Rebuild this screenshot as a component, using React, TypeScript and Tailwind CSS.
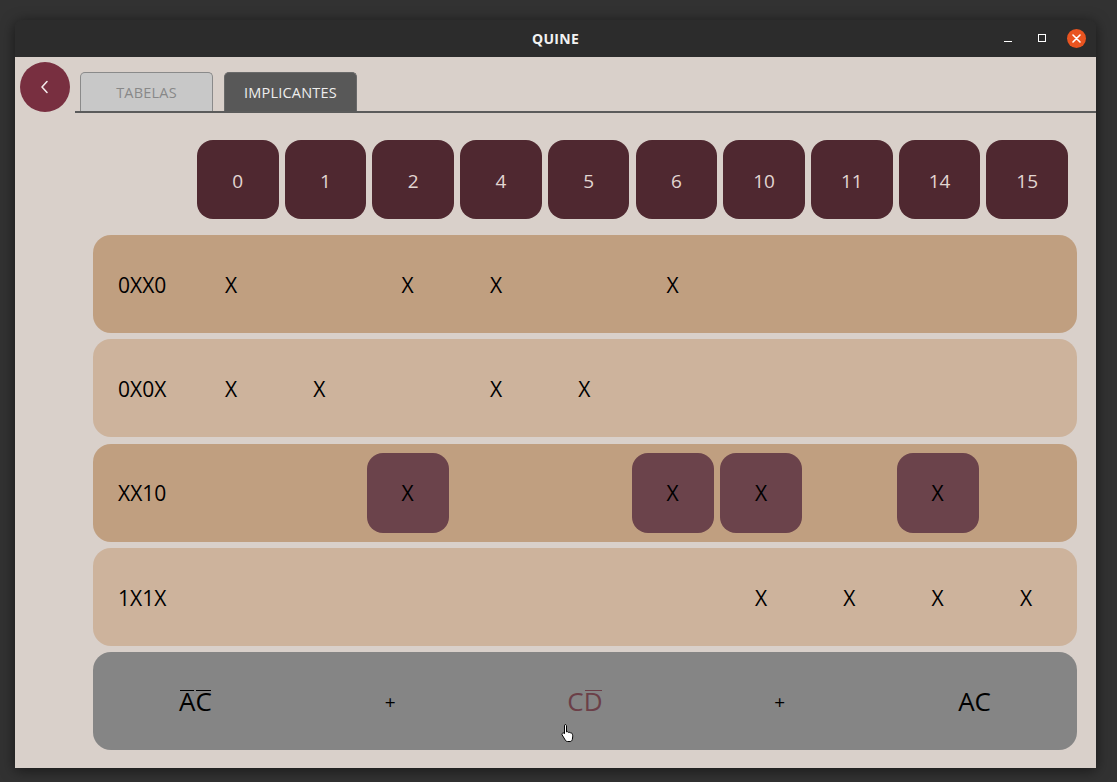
import React from "react";

const cols = [0, 1, 2, 4, 5, 6, 10, 11, 14, 15];

type Row = { label: string; marks: number[]; hi?: boolean; dark: boolean };
const rows: Row[] = [
  { label: "0XX0", marks: [0, 2, 4, 6], dark: true },
  { label: "0X0X", marks: [0, 1, 4, 5], dark: false },
  { label: "XX10", marks: [2, 6, 10, 14], hi: true, dark: true },
  { label: "1X1X", marks: [10, 11, 14, 15], dark: false },
];

function Bar({ children }: { children: React.ReactNode }) {
  return (
    <span className="relative inline-block">
      {children}
      <span className="absolute left-[1px] right-[1px] top-[8px] h-[1.5px] bg-current" />
    </span>
  );
}

export default function App() {
  return (
    <div
      className="w-[1117px] h-[782px] bg-[#323232] pt-[20px] pl-[15px] overflow-hidden relative"
      style={{ fontFamily: '"Open Sans", "Noto Sans", sans-serif' }}
    >
      <div className="w-[1081px] h-[748px] flex flex-col rounded-t-[8px] overflow-hidden shadow-[0_2px_14px_rgba(0,0,0,0.55)]">
        {/* title bar */}
        <div className="h-[37px] bg-[#2c2c2c] flex items-center relative shrink-0">
          <div className="flex-1 text-center text-[14px] font-bold text-[#f2f2f2] tracking-[0.3px]">QUINE</div>
          <div className="absolute right-[10px] top-0 h-[37px] flex items-center">
            <div className="w-[8px] h-[1px] bg-white mr-[26px] mt-[5px]" />
            <div className="w-[8px] h-[8px] border border-white mr-[21px] mb-[1px]" />
            <div className="w-[19px] h-[19px] rounded-full bg-[#e95420] flex items-center justify-center">
              <svg width="9" height="9" viewBox="0 0 9 9">
                <path d="M1 1L8 8M8 1L1 8" stroke="white" strokeWidth="1.6" strokeLinecap="round" />
              </svg>
            </div>
          </div>
        </div>

        {/* content */}
        <div className="flex-1 bg-[#d9d0ca] flex flex-col">
          <div className="flex items-start">
            <div className="ml-[5px] mt-[5px] w-[50px] h-[50px] rounded-full bg-[#782f40] flex items-center justify-center">
              <svg width="12" height="16" viewBox="0 0 12 16">
                <path d="M8 2.5L3 8l5 5.5" stroke="#f3e9ea" strokeWidth="1.6" fill="none" strokeLinecap="round" strokeLinejoin="round" />
              </svg>
            </div>
            <div className="ml-[5px] mt-[15px] flex-1 h-[41px] border-b-2 border-[#5b5b5b] flex items-end pl-[5px] gap-[11px]">
              <div className="w-[133px] h-[39px] rounded-t-[5px] border border-b-0 border-[#8a8a8a] bg-[#c8c8c8] flex items-center justify-center pt-[1px] text-[14.5px] text-[#888888] tracking-[0.2px]">
                TABELAS
              </div>
              <div className="w-[133px] h-[39px] rounded-t-[5px] border border-b-0 border-[#6a6a6a] bg-[#585858] flex items-center justify-center pt-[1px] text-[14.5px] text-[#eeeeee] tracking-[0.2px]">
                IMPLICANTES
              </div>
            </div>
          </div>

          <div className="pl-[78px] pr-[19px] flex flex-col">
            {/* header */}
            <div className="mt-[27px] ml-[104px] w-[871px] flex justify-between">
              {cols.map((c) => (
                <div
                  key={c}
                  className="w-[81.5px] h-[79px] rounded-[16px] bg-[#4f2830] flex items-center justify-center pt-[3px] text-[19px] text-[#e2d6d2]"
                >
                  {c}
                </div>
              ))}
            </div>

            {/* rows */}
            <div className="mt-[16px] flex flex-col gap-[6.25px]">
              {rows.map((r) => (
                <div
                  key={r.label}
                  className={`h-[98px] rounded-[18px] flex items-center pl-[25px] ${r.dark ? "bg-[#c09f80]" : "bg-[#cdb39c]"}`}
                >
                  <div className="w-[72px] text-[21px] text-black pt-[3px]">{r.label}</div>
                  <div className="w-[877px] flex justify-between">
                    {cols.map((c) => {
                      const on = r.marks.includes(c);
                      return (
                        <div
                          key={c}
                          className={`w-[82px] h-[80px] rounded-[16px] flex items-center justify-center pt-[3px] text-[21px] text-black ${on && r.hi ? "bg-[#6b434b]" : ""}`}
                        >
                          {on ? "X" : ""}
                        </div>
                      );
                    })}
                  </div>
                </div>
              ))}

              {/* sum row */}
              <div className="h-[98px] rounded-[18px] bg-[#858585] flex items-center px-[5px] relative">
                <div className="flex-1 text-center text-[26px] text-black">
                  <Bar>A</Bar>
                  <Bar>C</Bar>
                </div>
                <div className="flex-1 text-center text-[19px] text-black pt-[2px]">+</div>
                <div className="flex-1 text-center text-[26px] text-[#6b3f48]">
                  C<Bar>D</Bar>
                </div>
                <div className="flex-1 text-center text-[19px] text-black pt-[2px]">+</div>
                <div className="flex-1 text-center text-[26px] text-black">AC</div>
              </div>
            </div>
          </div>
        </div>
      </div>

      {/* mouse cursor */}
      <svg className="absolute left-[560px] top-[723px]" width="18" height="20" viewBox="0 0 18 20">
        <path
          d="M5 1.5c.8 0 1.5.6 1.5 1.4v6l.4-.1c.7-.3 1.5.1 1.7.7.6-.4 1.5-.2 1.8.5.6-.3 1.4 0 1.7.6l.3.7c.3.8.4 1.7.3 2.6l-.4 2.6c-.2 1.1-1.1 2-2.3 2H7.5c-.9 0-1.7-.5-2.1-1.2L2.2 12c-.4-.7-.2-1.5.5-1.9.6-.3 1.300-.1 1.7.4l.1.2V2.9c0-.8.2-1.4.5-1.4z"
          fill="white"
          stroke="black"
          strokeWidth="1"
          strokeLinejoin="round"
        />
      </svg>
    </div>
  );
}
